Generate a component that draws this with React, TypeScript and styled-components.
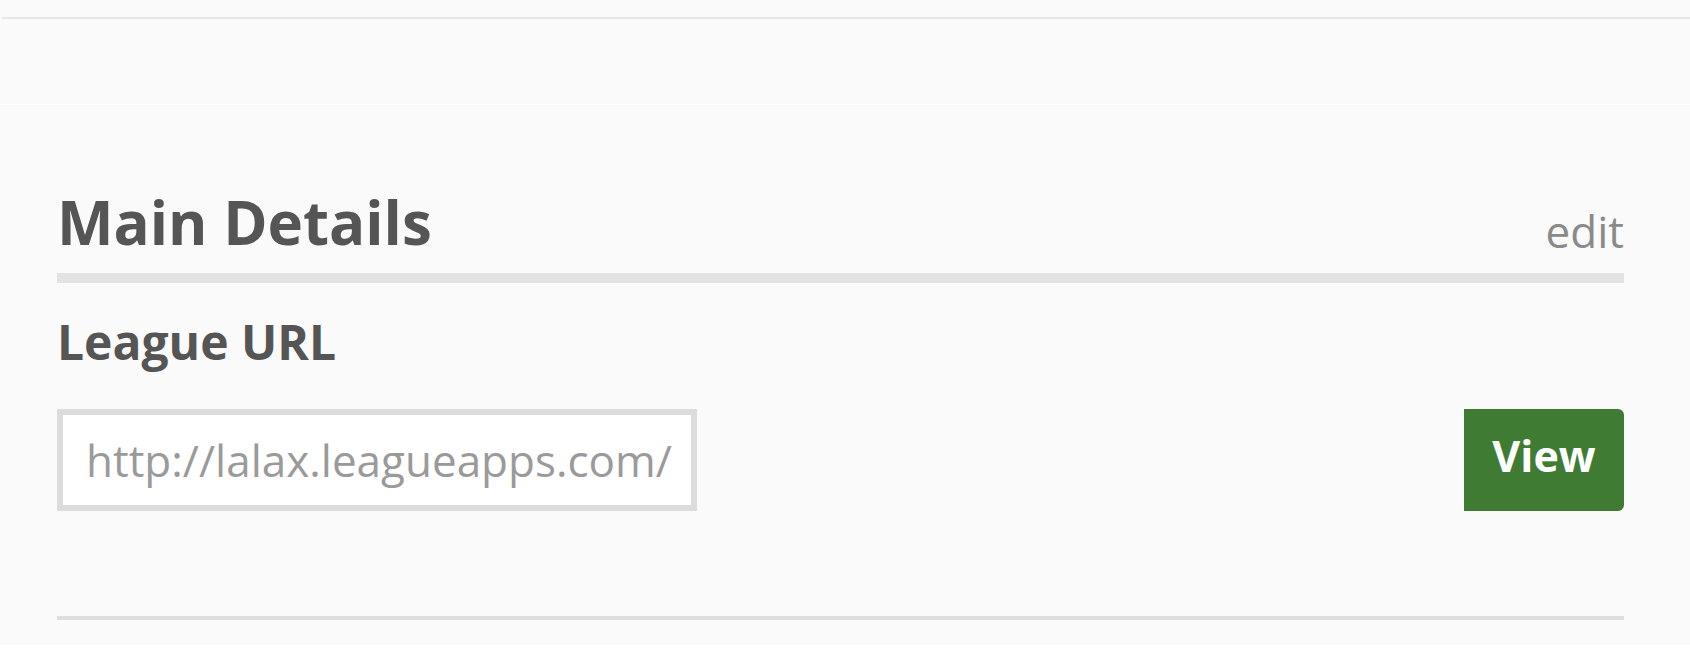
import { createGlobalStyle, styled } from 'styled-components';

const GlobalStyle = createGlobalStyle`
    body {
        margin: 0;
        background: #ffffff;
        font-family: 'Open Sans', 'Liberation Sans', sans-serif;
    }
`;

export default function App() {
    return (
        <>
            <GlobalStyle />
            <Page>
                <TopBar>
                    <TopLine />
                </TopBar>
                <Section>
                    <SectionHeader>
                        <Title>Main Details</Title>
                        <EditLink href="#">edit</EditLink>
                    </SectionHeader>
                    <HeaderRule />
                    <FieldLabel>League URL</FieldLabel>
                    <UrlRow>
                        <UrlInput readOnly value="http://lalax.leagueapps.com/" />
                        <ViewBtn>View</ViewBtn>
                    </UrlRow>
                    <FooterRule />
                </Section>
            </Page>
        </>
    );
}

const Page = styled.div`
    background-color: #fafafa;
`;

const TopBar = styled.div`
    height: 105px;
    padding-top: 17px;
    box-sizing: border-box;
    border-bottom: 1px solid #ffffff;
`;

const TopLine = styled.div`
    height: 2px;
    margin-left: 2px;
    background-color: #e6e6e6;
`;

const Section = styled.div`
    padding: 81px 66px 25px 57px;
`;

const SectionHeader = styled.div`
    display: flex;
    justify-content: space-between;
    align-items: flex-end;
`;

const Title = styled.h2`
    margin: 0;
    font-size: 60px;
    line-height: 1.2;
    font-weight: 700;
    color: #555555;
`;

const EditLink = styled.a`
    font-size: 44px;
    line-height: 1.2;
    color: #8a8a8a;
    text-decoration: none;
`;

const HeaderRule = styled.div`
    height: 10px;
    margin-top: 15px;
    background-color: #e3e3e3;
`;

const FieldLabel = styled.div`
    margin-top: 30px;
    font-size: 48px;
    line-height: 1.2;
    font-weight: 700;
    color: #555555;
`;

const UrlRow = styled.div`
    display: flex;
    justify-content: space-between;
    margin-top: 38px;
    height: 102px;
`;

const UrlInput = styled.input`
    width: 640px;
    box-sizing: border-box;
    border: 6px solid #dcdcdc;
    padding: 0 0 0 23px;
    background: #ffffff;
    font-family: 'Open Sans', 'Liberation Sans', sans-serif;
    font-size: 44px;
    color: #9a9a9a;
    &:focus {
        outline: none;
    }
`;

const ViewBtn = styled.button`
    width: 160px;
    padding: 0 0 8px;
    border: none;
    border-radius: 0 6px 6px 0;
    background-color: #3f7b33;
    color: #ffffff;
    font-family: 'Open Sans', 'Liberation Sans', sans-serif;
    font-size: 43px;
    font-weight: 700;
    cursor: pointer;
`;

const FooterRule = styled.div`
    height: 4px;
    margin-top: 105px;
    background-color: #dedede;
`;
